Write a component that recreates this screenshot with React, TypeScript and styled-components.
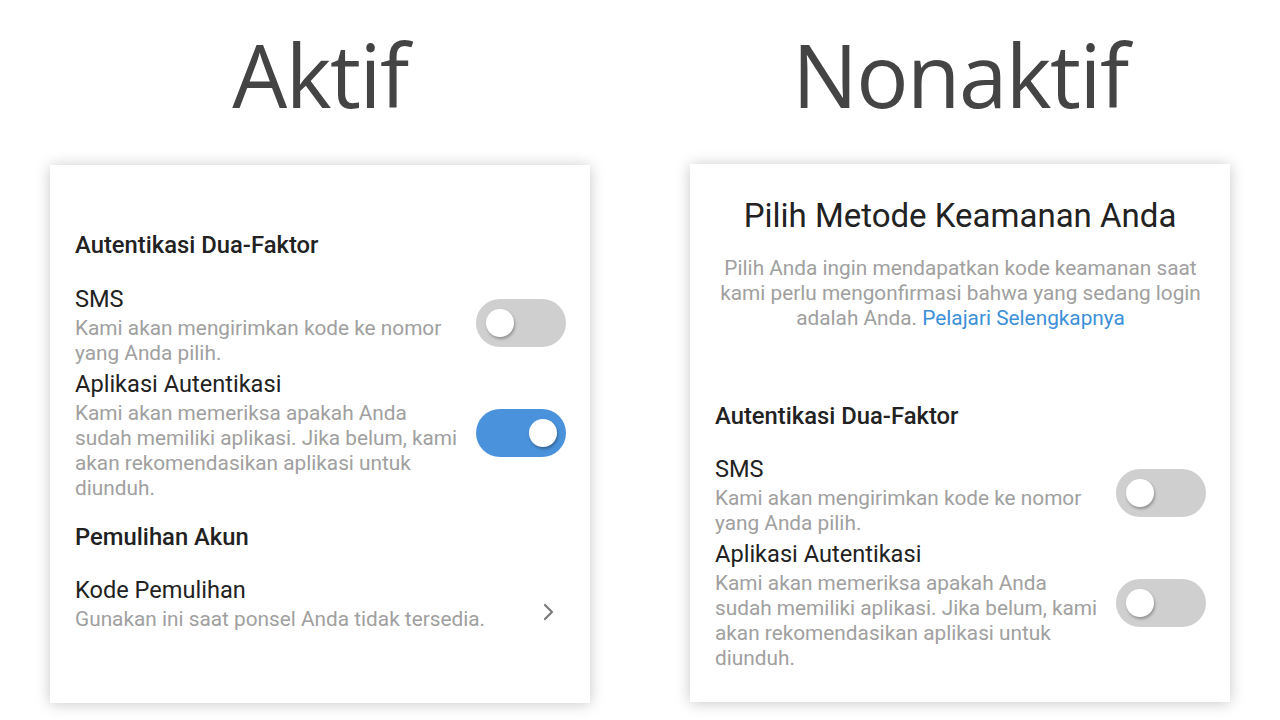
import React from "react";
import styled, { createGlobalStyle } from "styled-components";

const Global = createGlobalStyle`
  html, body { margin: 0; padding: 0; background: #ffffff; }
  body { font-family: Roboto, "Liberation Sans", sans-serif; }
  * { box-sizing: border-box; }
`;

const Page = styled.div`
  width: 1280px;
  height: 720px;
  display: flex;
  gap: 100px;
  padding-left: 50px;
  overflow: hidden;
`;

const Column = styled.div`
  width: 540px;
  display: flex;
  flex-direction: column;
  align-items: stretch;
`;

const BigTitle = styled.h1<{ $h: number }>`
  margin: 0;
  height: ${(p) => p.$h}px;
  padding-top: 19px;
  font-family: "Open Sans", "Noto Sans", sans-serif;
  font-weight: 400;
  font-size: 87px;
  line-height: 110px;
  letter-spacing: -1.5px;
  color: #444444;
  text-align: center;
`;

const Card = styled.div<{ $pt: number }>`
  height: 538px;
  background: #ffffff;
  box-shadow: 0 1px 14px rgba(0, 0, 0, 0.22);
  padding: ${(p) => p.$pt}px 24px 0 25px;
  display: flex;
  flex-direction: column;
`;

const CardTitle = styled.div`
  font-size: 33px;
  line-height: 40px;
  color: #222222;
  text-align: center;
  margin-right: 1px;
`;

const Intro = styled.p`
  margin: 20px 0 0;
  font-size: 20.8px;
  line-height: 25px;
  color: #a0a0a0;
  text-align: center;
`;

const Link = styled.span`
  color: #3d8fd8;
`;

const Heading = styled.div<{ $mt: number }>`
  margin-top: ${(p) => p.$mt}px;
  font-size: 23.8px;
  line-height: 30px;
  font-weight: 500;
  color: #222222;
`;

const Row = styled.div<{ $mt: number }>`
  margin-top: ${(p) => p.$mt}px;
  display: flex;
  align-items: center;
  gap: 16px;
`;

const Texts = styled.div`
  flex: 1;
  min-width: 0;
`;

const ItemTitle = styled.div`
  font-size: 23.6px;
  line-height: 28px;
  color: #222222;
`;

const Desc = styled.div`
  margin-top: 3px;
  font-size: 20.8px;
  line-height: 25px;
  color: #a0a0a0;
`;

const Track = styled.div<{ $on: boolean }>`
  flex: none;
  width: 90px;
  height: 48px;
  margin-bottom: 5px;
  border-radius: 24px;
  background: ${(p) => (p.$on ? "#4a92db" : "#cfcfcf")};
  display: flex;
  align-items: center;
  justify-content: ${(p) => (p.$on ? "flex-end" : "flex-start")};
  padding: 0 9px 0 10px;
`;

const Knob = styled.div`
  width: 28px;
  height: 28px;
  border-radius: 50%;
  background: #ffffff;
  box-shadow: 1px 2px 3px rgba(0, 0, 0, 0.3);
`;

const Chevron = styled.svg`
  flex: none;
  width: 14px;
  height: 20px;
  margin-right: 10px;
  margin-top: 16px;
`;

const Toggle = ({ on }: { on: boolean }) => (
  <Track $on={on}>
    <Knob />
  </Track>
);

const SmsText = "Kami akan mengirimkan kode ke nomor yang Anda pilih.";
const AppText =
  "Kami akan memeriksa apakah Anda sudah memiliki aplikasi. Jika belum, kami akan rekomendasikan aplikasi untuk diunduh.";

export default function App() {
  return (
    <>
      <Global />
      <Page>
        <Column>
          <BigTitle $h={165}>Aktif</BigTitle>
          <Card $pt={65}>
            <Heading $mt={0}>Autentikasi Dua-Faktor</Heading>
            <Row $mt={25}>
              <Texts>
                <ItemTitle>SMS</ItemTitle>
                <Desc>{SmsText}</Desc>
              </Texts>
              <Toggle on={false} />
            </Row>
            <Row $mt={4}>
              <Texts>
                <ItemTitle>Aplikasi Autentikasi</ItemTitle>
                <Desc>{AppText}</Desc>
              </Texts>
              <Toggle on={true} />
            </Row>
            <Heading $mt={21}>Pemulihan Akun</Heading>
            <Row $mt={24}>
              <Texts>
                <ItemTitle>Kode Pemulihan</ItemTitle>
                <Desc>Gunakan ini saat ponsel Anda tidak tersedia.</Desc>
              </Texts>
              <Chevron viewBox="0 0 14 20">
                <polyline
                  points="3,3 10,10 3,17"
                  fill="none"
                  stroke="#7a7a7a"
                  strokeWidth="2.2"
                  strokeLinecap="round"
                  strokeLinejoin="round"
                />
              </Chevron>
            </Row>
          </Card>
        </Column>
        <Column>
          <BigTitle $h={164}>Nonaktif</BigTitle>
          <Card $pt={32}>
            <CardTitle>Pilih Metode Keamanan Anda</CardTitle>
            <Intro>
              Pilih Anda ingin mendapatkan kode keamanan saat kami perlu
              mengonfirmasi bahwa yang sedang login adalah Anda.{" "}
              <Link>Pelajari Selengkapnya</Link>
            </Intro>
            <Heading $mt={70}>Autentikasi Dua-Faktor</Heading>
            <Row $mt={24}>
              <Texts>
                <ItemTitle>SMS</ItemTitle>
                <Desc>{SmsText}</Desc>
              </Texts>
              <Toggle on={false} />
            </Row>
            <Row $mt={4}>
              <Texts>
                <ItemTitle>Aplikasi Autentikasi</ItemTitle>
                <Desc>{AppText}</Desc>
              </Texts>
              <Toggle on={false} />
            </Row>
          </Card>
        </Column>
      </Page>
    </>
  );
}
